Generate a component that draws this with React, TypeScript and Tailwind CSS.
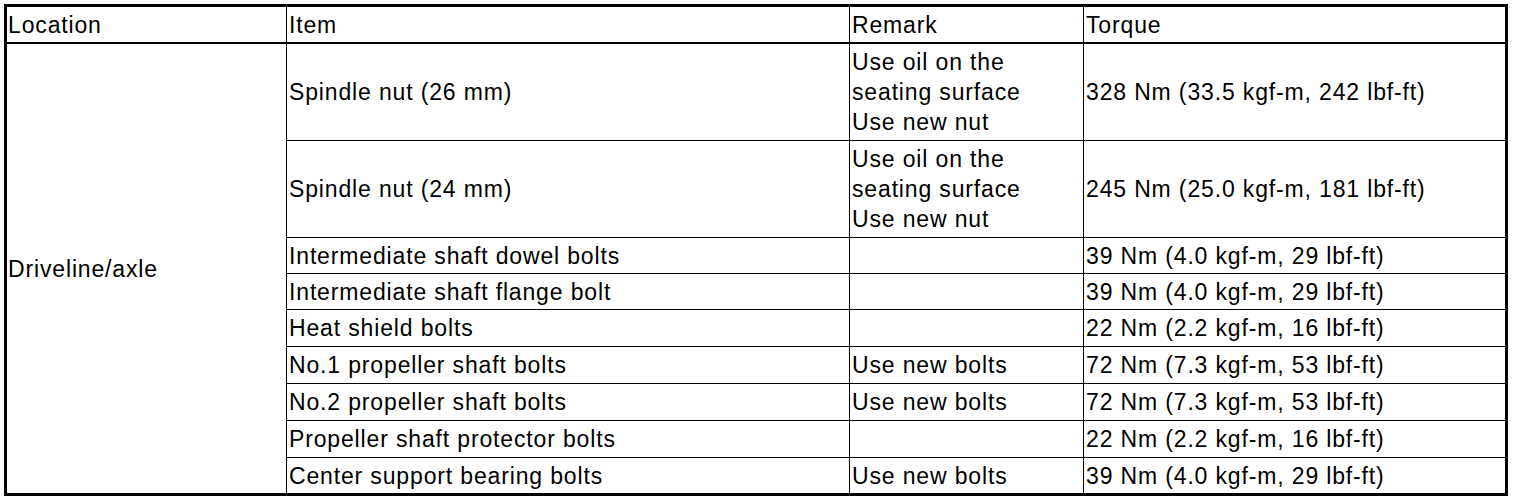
import React from "react";

const rows: { item: string; remark: string[]; torque: string; h: string }[] = [
  { item: "Spindle nut (26 mm)", remark: ["Use oil on the", "seating surface", "Use new nut"], torque: "328 Nm (33.5 kgf-m, 242 lbf-ft)", h: "h-[97px]" },
  { item: "Spindle nut (24 mm)", remark: ["Use oil on the", "seating surface", "Use new nut"], torque: "245 Nm (25.0 kgf-m, 181 lbf-ft)", h: "h-[97px]" },
  { item: "Intermediate shaft dowel bolts", remark: [], torque: "39 Nm (4.0 kgf-m, 29 lbf-ft)", h: "h-[36px]" },
  { item: "Intermediate shaft flange bolt", remark: [], torque: "39 Nm (4.0 kgf-m, 29 lbf-ft)", h: "h-[36px]" },
  { item: "Heat shield bolts", remark: [], torque: "22 Nm (2.2 kgf-m, 16 lbf-ft)", h: "h-[37px]" },
  { item: "No.1 propeller shaft bolts", remark: ["Use new bolts"], torque: "72 Nm (7.3 kgf-m, 53 lbf-ft)", h: "h-[37px]" },
  { item: "No.2 propeller shaft bolts", remark: ["Use new bolts"], torque: "72 Nm (7.3 kgf-m, 53 lbf-ft)", h: "h-[37px]" },
  { item: "Propeller shaft protector bolts", remark: [], torque: "22 Nm (2.2 kgf-m, 16 lbf-ft)", h: "h-[37px]" },
  { item: "Center support bearing bolts", remark: ["Use new bolts"], torque: "39 Nm (4.0 kgf-m, 29 lbf-ft)", h: "h-[35px]" },
];

export default function App() {
  return (
    <div className="w-[1520px] h-[502px] bg-white pt-[4px] pl-[4px] text-black font-['Liberation_Sans',Arial,sans-serif] text-[23px] leading-[30px] tracking-[0.85px]">
      <div className="w-[1504px] border-[3px] border-black flex flex-col">
        {/* header */}
        <div className="flex h-[37px] border-b-2 border-black">
          <div className="w-[280px] border-r border-black flex items-center pl-[1px]">Location</div>
          <div className="w-[563px] border-r border-black flex items-center pl-[2px]">Item</div>
          <div className="w-[234px] border-r border-black flex items-center pl-[2px]">Remark</div>
          <div className="w-[421px] flex items-center pl-[2px]">Torque</div>
        </div>
        <div className="flex">
          <div className="w-[280px] border-r border-black flex items-center pl-[1px]">Driveline/axle</div>
          <div className="flex flex-col">
            {rows.map((r, i) => (
              <div key={i} className={`flex ${r.h} ${i < rows.length - 1 ? "border-b border-black" : ""}`}>
                <div className="w-[563px] border-r border-black flex items-center pl-[2px]">{r.item}</div>
                <div className="w-[234px] border-r border-black flex flex-col justify-center pl-[2px]">
                  {r.remark.map((l, j) => (
                    <div key={j}>{l}</div>
                  ))}
                </div>
                <div className="w-[421px] flex items-center pl-[2px]">{r.torque}</div>
              </div>
            ))}
          </div>
        </div>
      </div>
    </div>
  );
}
